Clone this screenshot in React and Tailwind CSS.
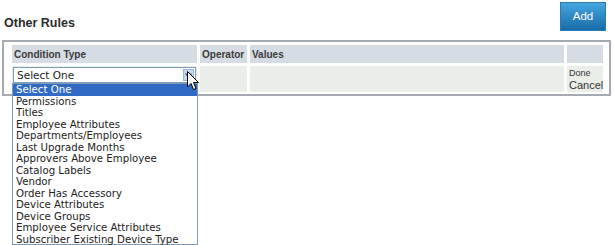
import React from "react";

const options = [
  "Select One",
  "Permissions",
  "Titles",
  "Employee Attributes",
  "Departments/Employees",
  "Last Upgrade Months",
  "Approvers Above Employee",
  "Catalog Labels",
  "Vendor",
  "Order Has Accessory",
  "Device Attributes",
  "Device Groups",
  "Employee Service Attributes",
  "Subscriber Existing Device Type",
];

const Cursor = () => (
  <svg width="13" height="21" viewBox="0 0 13 21" className="absolute left-[187px] top-[71px]">
    <path
      d="M0.5 0.5 L0.5 16 L4 12.5 L6.5 18.5 L9 17.5 L6.5 11.5 L11.5 11.5 Z"
      fill="#fff"
      stroke="#000"
      strokeWidth="1"
      strokeLinejoin="round"
    />
  </svg>
);

export default function App() {
  return (
    <div className="relative w-[614px] h-[245px] bg-white overflow-hidden font-['Liberation_Sans',Arial,sans-serif]">
      {/* Title + Add */}
      <div className="flex items-start justify-between pl-1 pr-2 pt-[2px] h-[38px]">
        <h2 className="mt-[14px] text-[12.5px] leading-[14px] font-bold text-[#2b2b2b]">Other Rules</h2>
        <button className="w-[46px] h-[29px] text-[11.5px] text-white bg-gradient-to-b from-[#45a6e0] to-[#186ca7] border border-[#2a7bb4]">
          Add
        </button>
      </div>

      {/* Rules table */}
      <div className="ml-[2px] mt-[2px] w-[609px] border-2 border-[#a3aab2] pl-[8px] pr-[6px] pt-[3px] pb-[2px]">
        <div className="grid grid-cols-[185px_47px_314px_36px] gap-x-[3px] gap-y-[3px]">
          <div className="h-[18px] bg-[#d5dce4] pl-[2px] flex items-center text-[10px] font-bold text-[#3c3c3c]">
            Condition Type
          </div>
          <div className="h-[18px] bg-[#d5dce4] pl-[2px] flex items-center text-[10px] font-bold text-[#3c3c3c]">
            Operator
          </div>
          <div className="h-[18px] bg-[#d5dce4] pl-[2px] flex items-center text-[10px] font-bold text-[#3c3c3c]">
            Values
          </div>
          <div className="h-[18px] bg-[#d5dce4]" />

          <div className="h-[26px] bg-[#eaeee8] relative">
            <div className="ml-[1px] mt-[1px] w-[183px] h-[16px] bg-white border border-[#7f9db9] flex items-center justify-between font-['DejaVu_Sans',Verdana,sans-serif] text-[10.5px] text-[#222]">
              <span className="pl-[3px] leading-none">Select One</span>
              <span className="w-[11px] h-[12px] mr-[1px] bg-[#c6d7f0] border border-[#9bb5dc] flex items-center justify-center">
                <svg width="7" height="5" viewBox="0 0 7 5">
                  <path d="M0.5 0.5 L3.5 4 L6.5 0.5" fill="none" stroke="#4d6185" strokeWidth="1.4" />
                </svg>
              </span>
            </div>
          </div>
          <div className="h-[26px] bg-[#eaeee8]" />
          <div className="h-[26px] bg-[#eaeee8]" />
          <div className="h-[26px] bg-[#eaeee8] pl-[2px] flex flex-col justify-center text-[#333]">
            <span className="text-[9px] leading-[11px]">Done</span>
            <span className="text-[11px] leading-[12px]">Cancel</span>
          </div>
        </div>
      </div>

      {/* Open dropdown list */}
      <ul className="absolute left-[12px] top-[83px] w-[186px] h-[162px] bg-white border border-[#7f9db9] font-['DejaVu_Sans',Verdana,sans-serif] text-[10.2px] text-[#222]">
        {options.map((o, i) => (
          <li
            key={o}
            className={`h-[11.5px] leading-[11.5px] pl-[3px] whitespace-nowrap ${
              i === 0 ? "bg-[#316ac5] text-white" : ""
            }`}
          >
            {o}
          </li>
        ))}
      </ul>

      <Cursor />
    </div>
  );
}
